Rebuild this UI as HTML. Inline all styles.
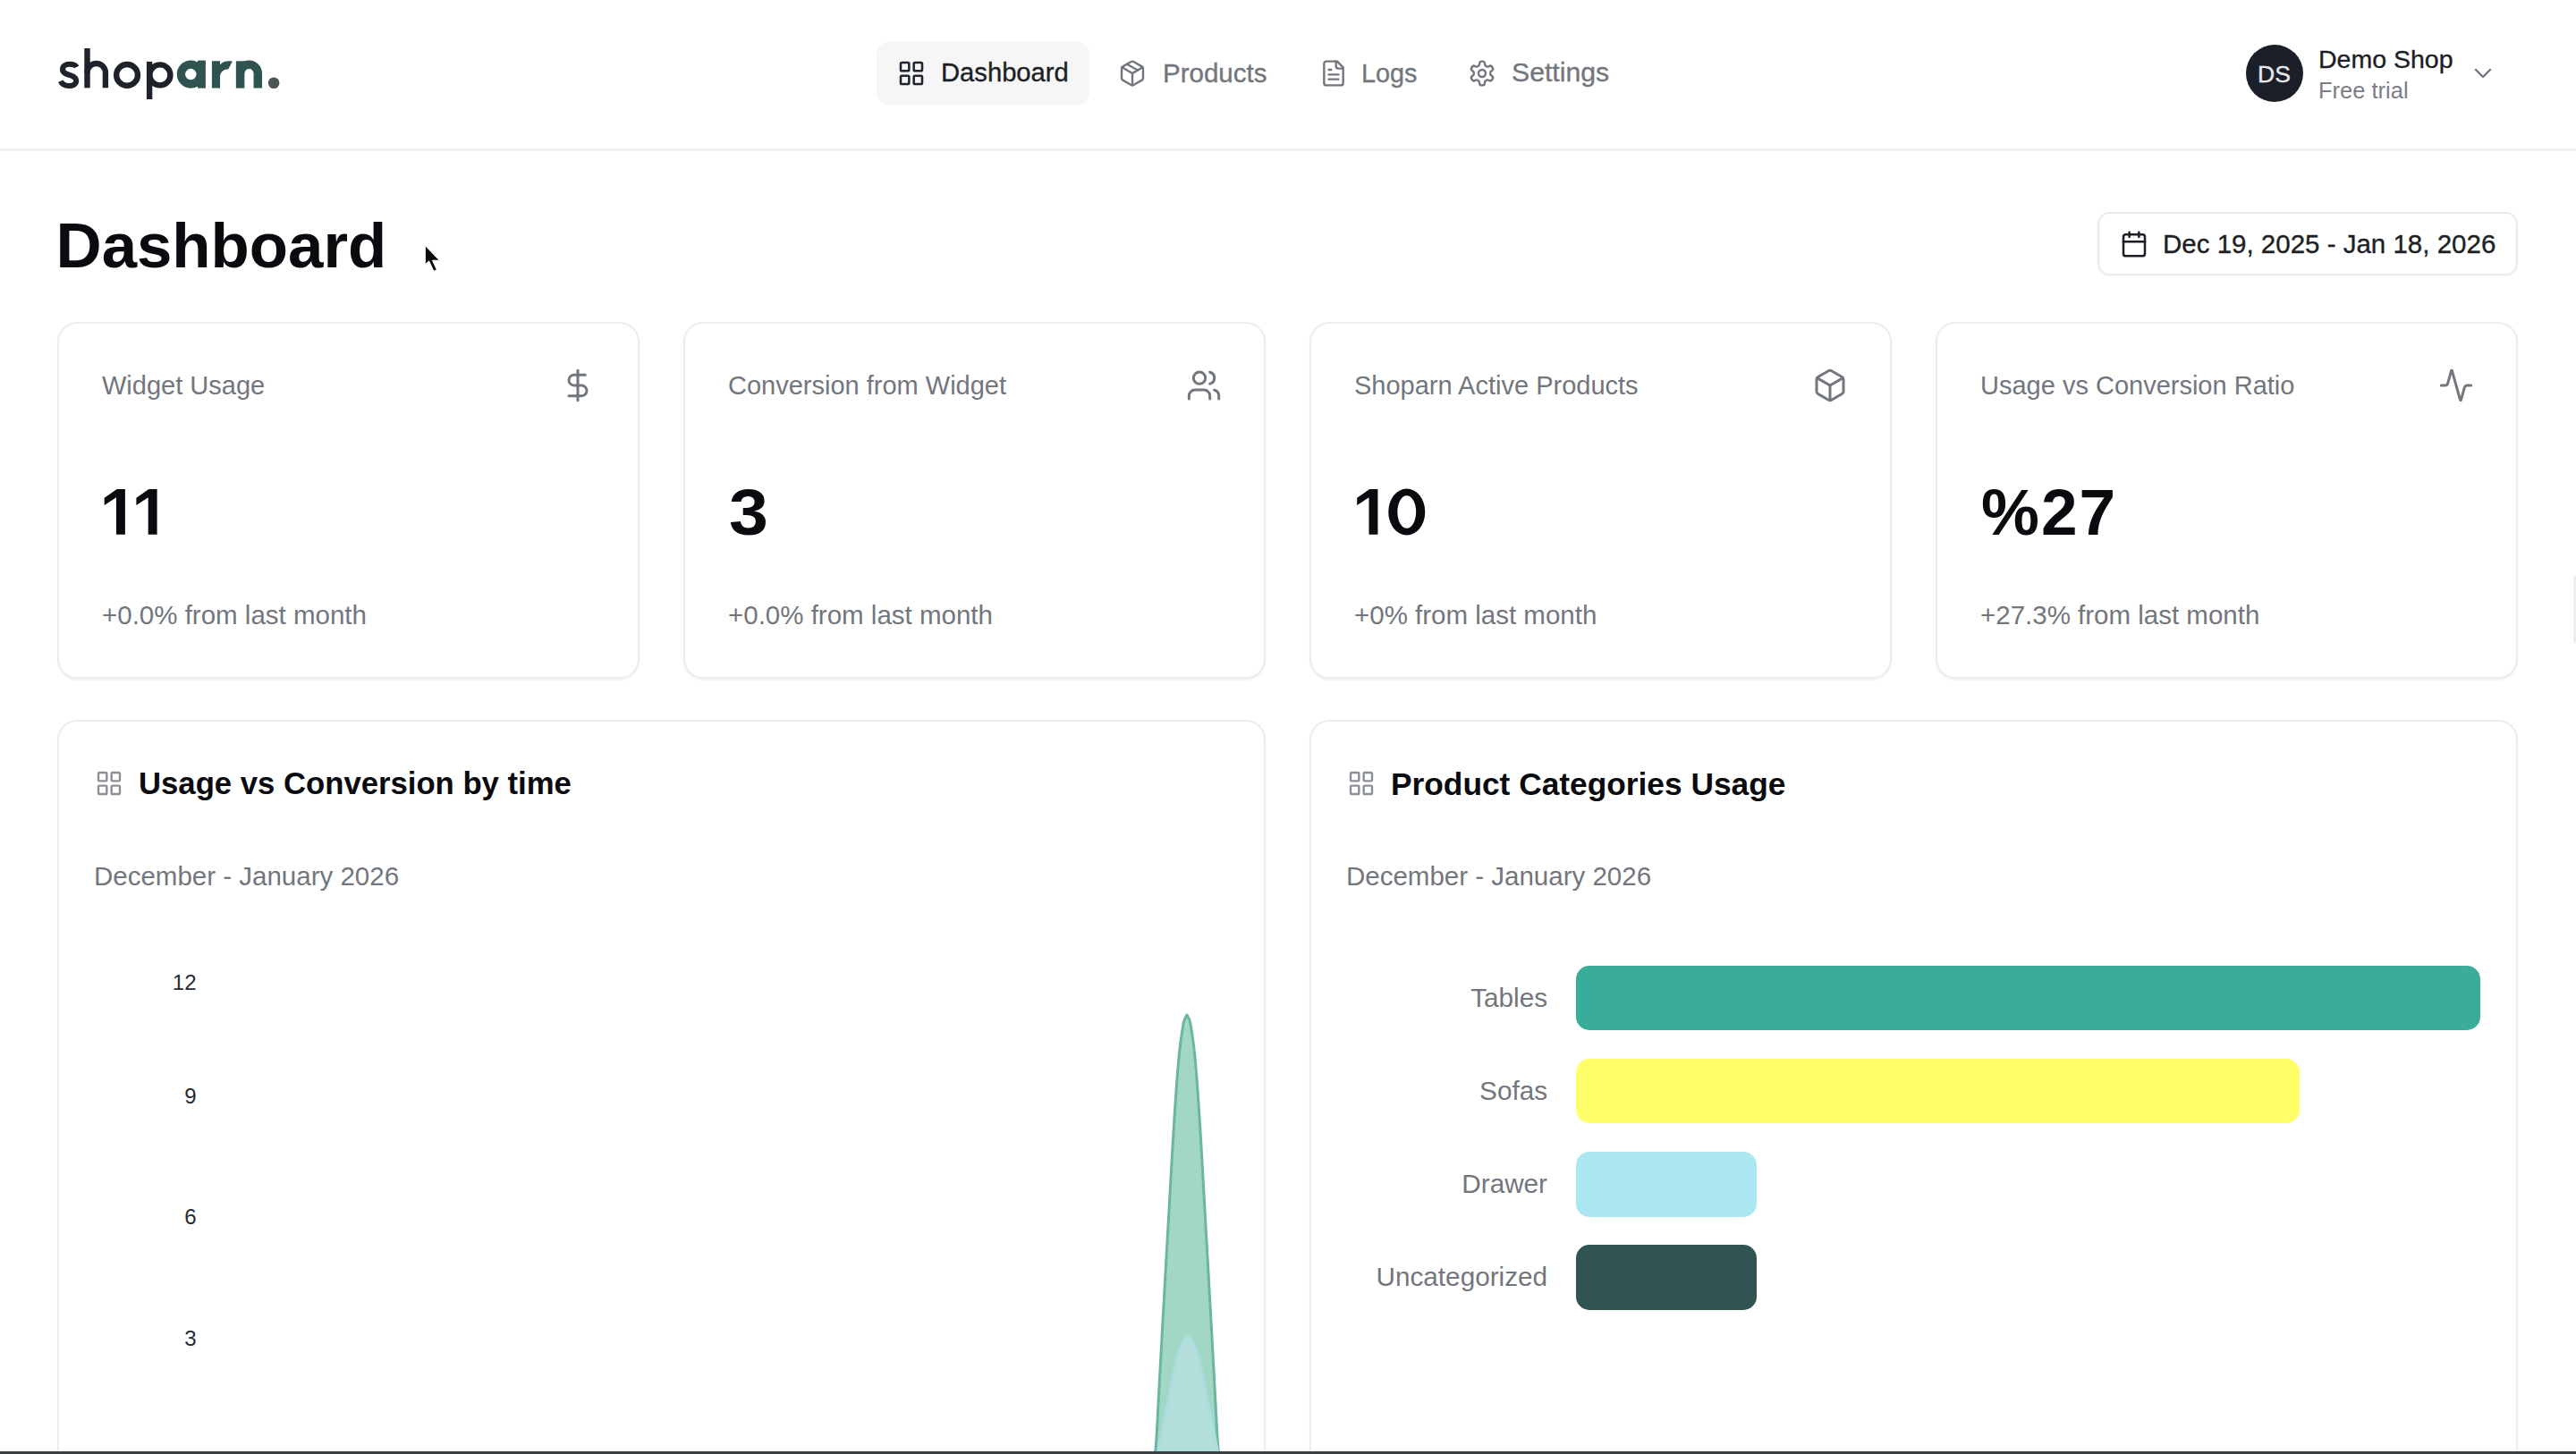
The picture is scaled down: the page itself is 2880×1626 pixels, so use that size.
<!DOCTYPE html>
<html><head><meta charset="utf-8"><title>Shoparn Dashboard</title>
<style>
html,body{margin:0;padding:0;background:#fff;width:2880px;height:1626px;overflow:hidden;position:relative;font-family:"Liberation Sans",sans-serif}
.t{position:absolute;line-height:1;white-space:nowrap}
.i{position:absolute;display:block}
.card{position:absolute;background:#fff;border:2px solid #ececee;border-radius:22px;box-sizing:border-box;box-shadow:0 2px 2px rgba(0,0,0,.05)}
.abs{position:absolute}
</style></head><body>
<div class="abs" style="left:0;top:166px;width:2880px;height:3px;background:#f0f1f3"></div>
<svg class="i" style="left:0;top:0;width:340px;height:130px" viewBox="0 0 340 130">
<g fill="none" stroke="#1e222b" stroke-width="6.4">
<path stroke-width="6.1" d="M85.6 75 C84.2 72.2 81.2 71.8 77.8 71.8 C72.8 71.8 70 74.3 70 77.6 C70 81.6 73.6 82.6 77.6 83.8 C82.2 85.1 85.2 86.6 85.2 90.3 C85.2 94.1 81.6 96 77.2 96 C72.6 96 69.3 94.2 67.8 90.8"/>
<path d="M97.5 54 V98.3"/>
<path d="M97.5 81.2 A10.2 10.2 0 0 1 117.9 81.2 V98.3"/>
<circle cx="142.05" cy="83.9" r="11.9"/>
<path d="M167.1 68.9 V111"/>
<circle cx="178.9" cy="83.9" r="11.5"/>
</g>
<g fill="none" stroke="#2f534f" stroke-width="9.3">
<circle cx="213.3" cy="83.1" r="10.9"/>
</g>
<g fill="#2f534f">
<rect x="221" y="67.6" width="8.9" height="31"/>
<path d="M236.9 68.3 H246 V72.5 C248.5 69.5 252 68.3 257 68.3 L259.9 68.6 L255.2 77.4 C251 77.2 247 79 246 85 V98.6 H236.9 Z"/>
</g>
<g fill="none" stroke="#2f534f" stroke-width="9.5">
<path d="M268.6 68.3 V98.6"/>
<path d="M268.6 82 A9.85 9.85 0 0 1 288.3 82 V98.6"/>
</g>
<circle cx="306.1" cy="92.8" r="6.3" fill="#4a5755"/>
</svg>
<div class="abs" style="left:980px;top:47px;width:238px;height:70px;border-radius:14px;background:#f6f6f7"></div>
<svg class="i" style="left:1002.5px;top:66.2px;width:32px;height:32px;color:#1f2430" viewBox="0 0 24 24" fill="none" stroke="currentColor" stroke-width="1.9" stroke-linecap="round" stroke-linejoin="round"><rect width="7" height="7" x="3" y="3" rx="1"/><rect width="7" height="7" x="14" y="3" rx="1"/><rect width="7" height="7" x="14" y="14" rx="1"/><rect width="7" height="7" x="3" y="14" rx="1"/></svg>
<div class="t" style="left:1052.0px;top:67.3px;font-size:29.2px;color:#1c1f26;font-weight:400;-webkit-text-stroke:0.35px currentColor;">Dashboard</div>
<svg class="i" style="left:1250.0px;top:66.0px;width:32px;height:32px;color:#72767d" viewBox="0 0 24 24" fill="none" stroke="currentColor" stroke-width="1.8" stroke-linecap="round" stroke-linejoin="round"><path d="m7.5 4.27 9 5.15"/><path d="M21 8a2 2 0 0 0-1-1.73l-7-4a2 2 0 0 0-2 0l-7 4A2 2 0 0 0 3 8v8a2 2 0 0 0 1 1.73l7 4a2 2 0 0 0 2 0l7-4A2 2 0 0 0 21 16Z"/><path d="m3.3 7 8.7 5 8.7-5"/><path d="M12 22V12"/></svg>
<div class="t" style="left:1300.0px;top:67.0px;font-size:29.5px;color:#72767d;font-weight:400;-webkit-text-stroke:0.35px currentColor;">Products</div>
<svg class="i" style="left:1474.6px;top:66.0px;width:32px;height:32px;color:#72767d" viewBox="0 0 24 24" fill="none" stroke="currentColor" stroke-width="1.8" stroke-linecap="round" stroke-linejoin="round"><path d="M15 2H6a2 2 0 0 0-2 2v16a2 2 0 0 0 2 2h12a2 2 0 0 0 2-2V7Z"/><path d="M14 2v4a2 2 0 0 0 2 2h4"/><path d="M10 9H8"/><path d="M16 13H8"/><path d="M16 17H8"/></svg>
<div class="t" style="left:1522.0px;top:67.6px;font-size:28.8px;color:#72767d;font-weight:400;-webkit-text-stroke:0.35px currentColor;">Logs</div>
<svg class="i" style="left:1641.0px;top:66.0px;width:32px;height:32px;color:#72767d" viewBox="0 0 24 24" fill="none" stroke="currentColor" stroke-width="1.8" stroke-linecap="round" stroke-linejoin="round"><path d="M12.22 2h-.44a2 2 0 0 0-2 2v.18a2 2 0 0 1-1 1.73l-.43.25a2 2 0 0 1-2 0l-.15-.08a2 2 0 0 0-2.73.73l-.22.38a2 2 0 0 0 .73 2.73l.15.1a2 2 0 0 1 1 1.72v.51a2 2 0 0 1-1 1.74l-.15.09a2 2 0 0 0-.73 2.73l.22.38a2 2 0 0 0 2.73.73l.15-.08a2 2 0 0 1 2 0l.43.25a2 2 0 0 1 1 1.73V20a2 2 0 0 0 2 2h.44a2 2 0 0 0 2-2v-.18a2 2 0 0 1 1-1.73l.43-.25a2 2 0 0 1 2 0l.15.08a2 2 0 0 0 2.73-.73l.22-.39a2 2 0 0 0-.73-2.73l-.15-.08a2 2 0 0 1-1-1.74v-.5a2 2 0 0 1 1-1.74l.15-.09a2 2 0 0 0 .73-2.73l-.22-.38a2 2 0 0 0-2.73-.73l-.15.08a2 2 0 0 1-2 0l-.43-.25a2 2 0 0 1-1-1.73V4a2 2 0 0 0-2-2z"/><circle cx="12" cy="12" r="3"/></svg>
<div class="t" style="left:1690.0px;top:66.4px;font-size:30.2px;color:#72767d;font-weight:400;-webkit-text-stroke:0.35px currentColor;">Settings</div>
<div class="abs" style="left:2511px;top:50px;width:64px;height:64px;border-radius:50%;background:#1b1f2a"></div>
<div class="t" style="left:2524.0px;top:70.0px;font-size:26.5px;color:#e8e9ec;font-weight:400;-webkit-text-stroke:0.35px currentColor;">DS</div>
<div class="t" style="left:2592.0px;top:52.2px;font-size:28.5px;color:#1c1f26;font-weight:400;-webkit-text-stroke:0.35px currentColor;">Demo Shop</div>
<div class="t" style="left:2592.0px;top:89.4px;font-size:25.5px;color:#7a7e85;font-weight:400;">Free trial</div>
<svg class="i" style="left:2760.3px;top:65.6px;width:32px;height:32px;color:#72767d" viewBox="0 0 24 24" fill="none" stroke="currentColor" stroke-width="1.8" stroke-linecap="round" stroke-linejoin="round"><path d="m6 9 6 6 6-6"/></svg>
<div class="t" style="left:62.5px;top:239.7px;font-size:70.8px;color:#0a0b0f;font-weight:700;">Dashboard</div>
<svg class="i" style="left:470px;top:272px;width:24px;height:36px" viewBox="0 0 24 36"><path d="M5.3 2.6 L5.3 23.8 L9.6 19.9 L14.9 31.3 L18.4 29.8 L13.5 19.2 L21.4 19.3 Z" fill="#0b0c10" stroke="#fff" stroke-width="1" stroke-linejoin="round"/></svg>
<div class="abs" style="left:2345px;top:237px;width:470px;height:71px;border:2px solid #e9eaec;border-radius:14px;box-sizing:border-box;box-shadow:0 1px 3px rgba(0,0,0,.05)"></div>
<svg class="i" style="left:2370.0px;top:256.7px;width:32px;height:32px;color:#1c1f26" viewBox="0 0 24 24" fill="none" stroke="currentColor" stroke-width="1.9" stroke-linecap="round" stroke-linejoin="round"><rect width="18" height="18" x="3" y="4" rx="2" ry="2"/><line x1="16" x2="16" y1="2" y2="6"/><line x1="8" x2="8" y1="2" y2="6"/><line x1="3" x2="21" y1="10" y2="10"/></svg>
<div class="t" style="left:2418.0px;top:258.0px;font-size:29.5px;color:#1c1f26;font-weight:400;-webkit-text-stroke:0.35px currentColor;">Dec 19, 2025 - Jan 18, 2026</div>
<div class="card" style="left:64px;top:360px;width:651px;height:399px"></div>
<div class="t" style="left:114.0px;top:416.8px;font-size:29px;color:#72767d;font-weight:400;">Widget Usage</div>
<svg class="i" style="left:625.7px;top:411.2px;width:40px;height:40px;color:#72767d" viewBox="0 0 24 24" fill="none" stroke="currentColor" stroke-width="1.8" stroke-linecap="round" stroke-linejoin="round"><line x1="12" x2="12" y1="2" y2="22"/><path d="M17 5H9.5a3.5 3.5 0 0 0 0 7h5a3.5 3.5 0 0 1 0 7H6"/></svg>
<svg class="i" style="left:0px;top:0;width:300px;height:700px" viewBox="0 0 300 700"><path d="M139.9 547 V597.7 H130.0 V556.3 L116.7 564.9 V556.8 L130.7 547 Z M175.6 547 V597.7 H165.7 V556.3 L152.4 564.9 V556.8 L166.4 547 Z" fill="#0a0b0f" fill-rule="evenodd"/></svg>
<div class="t" style="left:114.0px;top:672.7px;font-size:29.5px;color:#72767d;font-weight:400;">+0.0% from last month</div>
<div class="card" style="left:764px;top:360px;width:651px;height:399px"></div>
<div class="t" style="left:814.0px;top:416.8px;font-size:29px;color:#72767d;font-weight:400;">Conversion from Widget</div>
<svg class="i" style="left:1325.7px;top:411.2px;width:40px;height:40px;color:#72767d" viewBox="0 0 24 24" fill="none" stroke="currentColor" stroke-width="1.8" stroke-linecap="round" stroke-linejoin="round"><path d="M16 21v-2a4 4 0 0 0-4-4H6a4 4 0 0 0-4 4v2"/><circle cx="9" cy="7" r="4"/><path d="M22 21v-2a4 4 0 0 0-3-3.87"/><path d="M16 3.13a4 4 0 0 1 0 7.75"/></svg>
<div class="t" style="left:815.0px;top:535.9px;font-size:73px;color:#0a0b0f;font-weight:700;letter-spacing:0;display:inline-block;transform:scaleX(1.08);transform-origin:0 0;">3</div>
<div class="t" style="left:814.0px;top:672.7px;font-size:29.5px;color:#72767d;font-weight:400;">+0.0% from last month</div>
<div class="card" style="left:1464px;top:360px;width:651px;height:399px"></div>
<div class="t" style="left:1514.0px;top:416.8px;font-size:29px;color:#72767d;font-weight:400;">Shoparn Active Products</div>
<svg class="i" style="left:2025.7px;top:411.2px;width:40px;height:40px;color:#72767d" viewBox="0 0 24 24" fill="none" stroke="currentColor" stroke-width="1.8" stroke-linecap="round" stroke-linejoin="round"><path d="M21 8a2 2 0 0 0-1-1.73l-7-4a2 2 0 0 0-2 0l-7 4A2 2 0 0 0 3 8v8a2 2 0 0 0 1 1.73l7 4a2 2 0 0 0 2 0l7-4A2 2 0 0 0 21 16Z"/><path d="m3.3 7 8.7 5 8.7-5"/><path d="M12 22V12"/></svg>
<svg class="i" style="left:1400px;top:0;width:300px;height:700px" viewBox="0 0 300 700"><path d="M140.4 547 V597.7 H130.5 V556.3 L117.2 564.9 V556.8 L131.2 547 Z M152.25 572.5 A20.5 26 0 1 0 193.25 572.5 A20.5 26 0 1 0 152.25 572.5 Z M162.35 572.5 A10.4 18.2 0 1 1 183.15 572.5 A10.4 18.2 0 1 1 162.35 572.5 Z" fill="#0a0b0f" fill-rule="evenodd"/></svg>
<div class="t" style="left:1514.0px;top:672.7px;font-size:29.5px;color:#72767d;font-weight:400;">+0% from last month</div>
<div class="card" style="left:2164px;top:360px;width:651px;height:399px"></div>
<div class="t" style="left:2214.0px;top:416.8px;font-size:29px;color:#72767d;font-weight:400;">Usage vs Conversion Ratio</div>
<svg class="i" style="left:2725.7px;top:411.2px;width:40px;height:40px;color:#72767d" viewBox="0 0 24 24" fill="none" stroke="currentColor" stroke-width="1.8" stroke-linecap="round" stroke-linejoin="round"><path d="M22 12h-2.48a2 2 0 0 0-1.93 1.46l-2.35 8.36a.25.25 0 0 1-.48 0L9.24 2.18a.25.25 0 0 0-.48 0l-2.35 8.36A2 2 0 0 1 4.49 12H2"/></svg>
<div class="t" style="left:2215.0px;top:535.9px;font-size:73px;color:#0a0b0f;font-weight:700;letter-spacing:2px;">%27</div>
<div class="t" style="left:2214.0px;top:672.7px;font-size:29.5px;color:#72767d;font-weight:400;">+27.3% from last month</div>
<div class="card" style="left:64px;top:805px;width:1351px;height:900px"></div>
<svg class="i" style="left:105.8px;top:859.7px;width:32px;height:32px;color:#8b8f97" viewBox="0 0 24 24" fill="none" stroke="currentColor" stroke-width="1.8" stroke-linecap="round" stroke-linejoin="round"><rect width="7" height="7" x="3" y="3" rx="1"/><rect width="7" height="7" x="14" y="3" rx="1"/><rect width="7" height="7" x="14" y="14" rx="1"/><rect width="7" height="7" x="3" y="14" rx="1"/></svg>
<div class="t" style="left:155.0px;top:859.0px;font-size:34.7px;color:#0a0b0f;font-weight:700;">Usage vs Conversion by time</div>
<div class="t" style="left:105.0px;top:965.2px;font-size:29.5px;color:#72767d;font-weight:400;">December - January 2026</div>
<div class="card" style="left:1464px;top:805px;width:1351px;height:900px"></div>
<svg class="i" style="left:1505.8px;top:859.7px;width:32px;height:32px;color:#8b8f97" viewBox="0 0 24 24" fill="none" stroke="currentColor" stroke-width="1.8" stroke-linecap="round" stroke-linejoin="round"><rect width="7" height="7" x="3" y="3" rx="1"/><rect width="7" height="7" x="14" y="3" rx="1"/><rect width="7" height="7" x="14" y="14" rx="1"/><rect width="7" height="7" x="3" y="14" rx="1"/></svg>
<div class="t" style="left:1555.0px;top:858.5px;font-size:35.3px;color:#0a0b0f;font-weight:700;">Product Categories Usage</div>
<div class="t" style="left:1505.0px;top:965.2px;font-size:29.5px;color:#72767d;font-weight:400;">December - January 2026</div>
<div class="t" style="right:2660.5px;top:1086.9px;font-size:24px;color:#262a31;font-weight:400;">12</div>
<div class="t" style="right:2660.5px;top:1214.1px;font-size:24px;color:#262a31;font-weight:400;">9</div>
<div class="t" style="right:2660.5px;top:1349.4px;font-size:24px;color:#262a31;font-weight:400;">6</div>
<div class="t" style="right:2660.5px;top:1484.7px;font-size:24px;color:#262a31;font-weight:400;">3</div>
<div class="t" style="right:2660.5px;top:1620.0px;font-size:24px;color:#262a31;font-weight:400;">0</div>
<svg class="i" style="left:0;top:0;width:2880px;height:1626px" viewBox="0 0 2880 1626"><path d="M1290.10 1631.60 L1292.05 1620.14 L1292.89 1608.68 L1293.59 1597.23 L1294.20 1585.77 L1294.77 1574.31 L1295.35 1562.85 L1295.97 1551.40 L1296.60 1539.94 L1297.22 1528.48 L1297.85 1517.02 L1298.47 1505.57 L1299.10 1494.11 L1299.74 1482.65 L1300.37 1471.19 L1301.01 1459.73 L1301.64 1448.28 L1302.28 1436.82 L1302.92 1425.36 L1303.57 1413.90 L1304.21 1402.45 L1304.86 1390.99 L1305.51 1379.53 L1306.16 1368.07 L1306.81 1356.62 L1307.47 1345.16 L1308.11 1333.70 L1308.74 1322.24 L1309.38 1310.78 L1310.02 1299.33 L1310.68 1287.87 L1311.34 1276.41 L1312.03 1264.95 L1312.75 1253.50 L1313.50 1242.04 L1314.27 1230.58 L1315.05 1219.12 L1315.88 1207.67 L1316.79 1196.21 L1317.80 1184.75 L1317.92 1183.48 L1318.05 1182.20 L1318.17 1180.93 L1318.30 1179.66 L1318.43 1178.38 L1318.56 1177.11 L1318.70 1175.84 L1318.83 1174.57 L1318.98 1173.29 L1319.12 1172.02 L1319.27 1170.75 L1319.42 1169.47 L1319.58 1168.20 L1319.74 1166.93 L1319.90 1165.65 L1320.07 1164.38 L1320.24 1163.11 L1320.41 1161.83 L1320.59 1160.56 L1320.77 1159.29 L1320.95 1158.02 L1321.14 1156.74 L1321.34 1155.47 L1321.53 1154.20 L1321.73 1152.92 L1321.93 1151.65 L1322.12 1150.38 L1322.32 1149.10 L1322.53 1147.83 L1322.75 1146.56 L1322.99 1145.28 L1323.26 1144.01 L1323.55 1142.74 L1323.89 1141.47 L1324.27 1140.19 L1324.83 1138.92 L1325.53 1137.65 L1326.29 1136.37 L1327.00 1135.10 L1327.71 1136.37 L1328.47 1137.65 L1329.17 1138.92 L1329.73 1140.19 L1330.11 1141.47 L1330.45 1142.74 L1330.74 1144.01 L1331.01 1145.28 L1331.25 1146.56 L1331.47 1147.83 L1331.68 1149.10 L1331.88 1150.38 L1332.07 1151.65 L1332.27 1152.92 L1332.47 1154.20 L1332.66 1155.47 L1332.86 1156.74 L1333.05 1158.02 L1333.23 1159.29 L1333.41 1160.56 L1333.59 1161.83 L1333.76 1163.11 L1333.93 1164.38 L1334.10 1165.65 L1334.26 1166.93 L1334.42 1168.20 L1334.58 1169.47 L1334.73 1170.75 L1334.88 1172.02 L1335.02 1173.29 L1335.17 1174.57 L1335.30 1175.84 L1335.44 1177.11 L1335.57 1178.38 L1335.70 1179.66 L1335.83 1180.93 L1335.95 1182.20 L1336.08 1183.48 L1336.20 1184.75 L1337.21 1196.21 L1338.12 1207.67 L1338.95 1219.12 L1339.73 1230.58 L1340.50 1242.04 L1341.25 1253.50 L1341.97 1264.95 L1342.66 1276.41 L1343.32 1287.87 L1343.98 1299.33 L1344.62 1310.78 L1345.26 1322.24 L1345.89 1333.70 L1346.53 1345.16 L1347.19 1356.62 L1347.84 1368.07 L1348.49 1379.53 L1349.14 1390.99 L1349.79 1402.45 L1350.43 1413.90 L1351.08 1425.36 L1351.72 1436.82 L1352.36 1448.28 L1352.99 1459.73 L1353.63 1471.19 L1354.26 1482.65 L1354.90 1494.11 L1355.53 1505.57 L1356.15 1517.02 L1356.78 1528.48 L1357.40 1539.94 L1358.03 1551.40 L1358.65 1562.85 L1359.23 1574.31 L1359.80 1585.77 L1360.41 1597.23 L1361.11 1608.68 L1361.95 1620.14 L1363.90 1631.60 Z" fill="#a2d6c5" stroke="none"/><path d="M1290.10 1631.60 L1292.05 1620.14 L1292.89 1608.68 L1293.59 1597.23 L1294.20 1585.77 L1294.77 1574.31 L1295.35 1562.85 L1295.97 1551.40 L1296.60 1539.94 L1297.22 1528.48 L1297.85 1517.02 L1298.47 1505.57 L1299.10 1494.11 L1299.74 1482.65 L1300.37 1471.19 L1301.01 1459.73 L1301.64 1448.28 L1302.28 1436.82 L1302.92 1425.36 L1303.57 1413.90 L1304.21 1402.45 L1304.86 1390.99 L1305.51 1379.53 L1306.16 1368.07 L1306.81 1356.62 L1307.47 1345.16 L1308.11 1333.70 L1308.74 1322.24 L1309.38 1310.78 L1310.02 1299.33 L1310.68 1287.87 L1311.34 1276.41 L1312.03 1264.95 L1312.75 1253.50 L1313.50 1242.04 L1314.27 1230.58 L1315.05 1219.12 L1315.88 1207.67 L1316.79 1196.21 L1317.80 1184.75 L1317.92 1183.48 L1318.05 1182.20 L1318.17 1180.93 L1318.30 1179.66 L1318.43 1178.38 L1318.56 1177.11 L1318.70 1175.84 L1318.83 1174.57 L1318.98 1173.29 L1319.12 1172.02 L1319.27 1170.75 L1319.42 1169.47 L1319.58 1168.20 L1319.74 1166.93 L1319.90 1165.65 L1320.07 1164.38 L1320.24 1163.11 L1320.41 1161.83 L1320.59 1160.56 L1320.77 1159.29 L1320.95 1158.02 L1321.14 1156.74 L1321.34 1155.47 L1321.53 1154.20 L1321.73 1152.92 L1321.93 1151.65 L1322.12 1150.38 L1322.32 1149.10 L1322.53 1147.83 L1322.75 1146.56 L1322.99 1145.28 L1323.26 1144.01 L1323.55 1142.74 L1323.89 1141.47 L1324.27 1140.19 L1324.83 1138.92 L1325.53 1137.65 L1326.29 1136.37 L1327.00 1135.10 L1327.71 1136.37 L1328.47 1137.65 L1329.17 1138.92 L1329.73 1140.19 L1330.11 1141.47 L1330.45 1142.74 L1330.74 1144.01 L1331.01 1145.28 L1331.25 1146.56 L1331.47 1147.83 L1331.68 1149.10 L1331.88 1150.38 L1332.07 1151.65 L1332.27 1152.92 L1332.47 1154.20 L1332.66 1155.47 L1332.86 1156.74 L1333.05 1158.02 L1333.23 1159.29 L1333.41 1160.56 L1333.59 1161.83 L1333.76 1163.11 L1333.93 1164.38 L1334.10 1165.65 L1334.26 1166.93 L1334.42 1168.20 L1334.58 1169.47 L1334.73 1170.75 L1334.88 1172.02 L1335.02 1173.29 L1335.17 1174.57 L1335.30 1175.84 L1335.44 1177.11 L1335.57 1178.38 L1335.70 1179.66 L1335.83 1180.93 L1335.95 1182.20 L1336.08 1183.48 L1336.20 1184.75 L1337.21 1196.21 L1338.12 1207.67 L1338.95 1219.12 L1339.73 1230.58 L1340.50 1242.04 L1341.25 1253.50 L1341.97 1264.95 L1342.66 1276.41 L1343.32 1287.87 L1343.98 1299.33 L1344.62 1310.78 L1345.26 1322.24 L1345.89 1333.70 L1346.53 1345.16 L1347.19 1356.62 L1347.84 1368.07 L1348.49 1379.53 L1349.14 1390.99 L1349.79 1402.45 L1350.43 1413.90 L1351.08 1425.36 L1351.72 1436.82 L1352.36 1448.28 L1352.99 1459.73 L1353.63 1471.19 L1354.26 1482.65 L1354.90 1494.11 L1355.53 1505.57 L1356.15 1517.02 L1356.78 1528.48 L1357.40 1539.94 L1358.03 1551.40 L1358.65 1562.85 L1359.23 1574.31 L1359.80 1585.77 L1360.41 1597.23 L1361.11 1608.68 L1361.95 1620.14 L1363.90 1631.60" fill="none" stroke="#6cb5a2" stroke-width="3" stroke-linejoin="round"/><path d="M1291.10 1631.60 L1293.05 1628.43 L1293.89 1625.27 L1294.59 1622.10 L1295.20 1618.94 L1295.77 1615.77 L1296.35 1612.60 L1296.97 1609.44 L1297.60 1606.27 L1298.22 1603.10 L1298.85 1599.94 L1299.47 1596.77 L1300.10 1593.61 L1300.74 1590.44 L1301.37 1587.27 L1302.01 1584.11 L1302.64 1580.94 L1303.28 1577.78 L1303.92 1574.61 L1304.57 1571.44 L1305.21 1568.28 L1305.86 1565.11 L1306.51 1561.94 L1307.16 1558.78 L1307.81 1555.61 L1308.47 1552.45 L1309.11 1549.28 L1309.74 1546.11 L1310.38 1542.95 L1311.02 1539.78 L1311.68 1536.62 L1312.34 1533.45 L1313.03 1530.28 L1313.75 1527.12 L1314.50 1523.95 L1315.27 1520.78 L1316.05 1517.62 L1316.88 1514.45 L1317.79 1511.29 L1318.80 1508.12 L1318.92 1507.77 L1319.05 1507.42 L1319.17 1507.06 L1319.30 1506.71 L1319.43 1506.36 L1319.56 1506.01 L1319.70 1505.66 L1319.83 1505.31 L1319.98 1504.95 L1320.12 1504.60 L1320.27 1504.25 L1320.42 1503.90 L1320.58 1503.55 L1320.74 1503.19 L1320.90 1502.84 L1321.07 1502.49 L1321.24 1502.14 L1321.41 1501.79 L1321.59 1501.44 L1321.77 1501.08 L1321.95 1500.73 L1322.14 1500.38 L1322.34 1500.03 L1322.53 1499.68 L1322.73 1499.33 L1322.93 1498.97 L1323.12 1498.62 L1323.32 1498.27 L1323.53 1497.92 L1323.75 1497.57 L1323.99 1497.21 L1324.26 1496.86 L1324.55 1496.51 L1324.89 1496.16 L1325.27 1495.81 L1325.83 1495.46 L1326.53 1495.10 L1327.29 1494.75 L1328.00 1494.40 L1328.71 1494.75 L1329.47 1495.10 L1330.17 1495.46 L1330.73 1495.81 L1331.11 1496.16 L1331.45 1496.51 L1331.74 1496.86 L1332.01 1497.21 L1332.25 1497.57 L1332.47 1497.92 L1332.68 1498.27 L1332.88 1498.62 L1333.07 1498.97 L1333.27 1499.33 L1333.47 1499.68 L1333.66 1500.03 L1333.86 1500.38 L1334.05 1500.73 L1334.23 1501.08 L1334.41 1501.44 L1334.59 1501.79 L1334.76 1502.14 L1334.93 1502.49 L1335.10 1502.84 L1335.26 1503.19 L1335.42 1503.55 L1335.58 1503.90 L1335.73 1504.25 L1335.88 1504.60 L1336.02 1504.95 L1336.17 1505.31 L1336.30 1505.66 L1336.44 1506.01 L1336.57 1506.36 L1336.70 1506.71 L1336.83 1507.06 L1336.95 1507.42 L1337.08 1507.77 L1337.20 1508.12 L1338.21 1511.29 L1339.12 1514.45 L1339.95 1517.62 L1340.73 1520.78 L1341.50 1523.95 L1342.25 1527.12 L1342.97 1530.28 L1343.66 1533.45 L1344.32 1536.62 L1344.98 1539.78 L1345.62 1542.95 L1346.26 1546.11 L1346.89 1549.28 L1347.53 1552.45 L1348.19 1555.61 L1348.84 1558.78 L1349.49 1561.94 L1350.14 1565.11 L1350.79 1568.28 L1351.43 1571.44 L1352.08 1574.61 L1352.72 1577.78 L1353.36 1580.94 L1353.99 1584.11 L1354.63 1587.27 L1355.26 1590.44 L1355.90 1593.61 L1356.53 1596.77 L1357.15 1599.94 L1357.78 1603.10 L1358.40 1606.27 L1359.03 1609.44 L1359.65 1612.60 L1360.23 1615.77 L1360.80 1618.94 L1361.41 1622.10 L1362.11 1625.27 L1362.95 1628.43 L1364.90 1631.60 Z" fill="#b3dfdb" stroke="none"/><path d="M1291.10 1631.60 L1293.05 1628.43 L1293.89 1625.27 L1294.59 1622.10 L1295.20 1618.94 L1295.77 1615.77 L1296.35 1612.60 L1296.97 1609.44 L1297.60 1606.27 L1298.22 1603.10 L1298.85 1599.94 L1299.47 1596.77 L1300.10 1593.61 L1300.74 1590.44 L1301.37 1587.27 L1302.01 1584.11 L1302.64 1580.94 L1303.28 1577.78 L1303.92 1574.61 L1304.57 1571.44 L1305.21 1568.28 L1305.86 1565.11 L1306.51 1561.94 L1307.16 1558.78 L1307.81 1555.61 L1308.47 1552.45 L1309.11 1549.28 L1309.74 1546.11 L1310.38 1542.95 L1311.02 1539.78 L1311.68 1536.62 L1312.34 1533.45 L1313.03 1530.28 L1313.75 1527.12 L1314.50 1523.95 L1315.27 1520.78 L1316.05 1517.62 L1316.88 1514.45 L1317.79 1511.29 L1318.80 1508.12 L1318.92 1507.77 L1319.05 1507.42 L1319.17 1507.06 L1319.30 1506.71 L1319.43 1506.36 L1319.56 1506.01 L1319.70 1505.66 L1319.83 1505.31 L1319.98 1504.95 L1320.12 1504.60 L1320.27 1504.25 L1320.42 1503.90 L1320.58 1503.55 L1320.74 1503.19 L1320.90 1502.84 L1321.07 1502.49 L1321.24 1502.14 L1321.41 1501.79 L1321.59 1501.44 L1321.77 1501.08 L1321.95 1500.73 L1322.14 1500.38 L1322.34 1500.03 L1322.53 1499.68 L1322.73 1499.33 L1322.93 1498.97 L1323.12 1498.62 L1323.32 1498.27 L1323.53 1497.92 L1323.75 1497.57 L1323.99 1497.21 L1324.26 1496.86 L1324.55 1496.51 L1324.89 1496.16 L1325.27 1495.81 L1325.83 1495.46 L1326.53 1495.10 L1327.29 1494.75 L1328.00 1494.40 L1328.71 1494.75 L1329.47 1495.10 L1330.17 1495.46 L1330.73 1495.81 L1331.11 1496.16 L1331.45 1496.51 L1331.74 1496.86 L1332.01 1497.21 L1332.25 1497.57 L1332.47 1497.92 L1332.68 1498.27 L1332.88 1498.62 L1333.07 1498.97 L1333.27 1499.33 L1333.47 1499.68 L1333.66 1500.03 L1333.86 1500.38 L1334.05 1500.73 L1334.23 1501.08 L1334.41 1501.44 L1334.59 1501.79 L1334.76 1502.14 L1334.93 1502.49 L1335.10 1502.84 L1335.26 1503.19 L1335.42 1503.55 L1335.58 1503.90 L1335.73 1504.25 L1335.88 1504.60 L1336.02 1504.95 L1336.17 1505.31 L1336.30 1505.66 L1336.44 1506.01 L1336.57 1506.36 L1336.70 1506.71 L1336.83 1507.06 L1336.95 1507.42 L1337.08 1507.77 L1337.20 1508.12 L1338.21 1511.29 L1339.12 1514.45 L1339.95 1517.62 L1340.73 1520.78 L1341.50 1523.95 L1342.25 1527.12 L1342.97 1530.28 L1343.66 1533.45 L1344.32 1536.62 L1344.98 1539.78 L1345.62 1542.95 L1346.26 1546.11 L1346.89 1549.28 L1347.53 1552.45 L1348.19 1555.61 L1348.84 1558.78 L1349.49 1561.94 L1350.14 1565.11 L1350.79 1568.28 L1351.43 1571.44 L1352.08 1574.61 L1352.72 1577.78 L1353.36 1580.94 L1353.99 1584.11 L1354.63 1587.27 L1355.26 1590.44 L1355.90 1593.61 L1356.53 1596.77 L1357.15 1599.94 L1357.78 1603.10 L1358.40 1606.27 L1359.03 1609.44 L1359.65 1612.60 L1360.23 1615.77 L1360.80 1618.94 L1361.41 1622.10 L1362.11 1625.27 L1362.95 1628.43 L1364.90 1631.60" fill="none" stroke="#aadde2" stroke-width="2.5" stroke-linejoin="round"/></svg>
<div class="abs" style="left:1761.5px;top:1079.6px;width:1011.7px;height:72.5px;border-radius:15px;background:#3aad9a"></div>
<div class="t" style="right:1150.0px;top:1100.7px;font-size:29.7px;color:#72767d;font-weight:400;">Tables</div>
<div class="abs" style="left:1761.5px;top:1183.7px;width:809.9px;height:72.5px;border-radius:15px;background:#ffff6a"></div>
<div class="t" style="right:1150.0px;top:1204.9px;font-size:29.7px;color:#72767d;font-weight:400;">Sofas</div>
<div class="abs" style="left:1761.5px;top:1288.3px;width:202.0px;height:72.5px;border-radius:15px;background:#aae7f0"></div>
<div class="t" style="right:1150.0px;top:1308.9px;font-size:29.7px;color:#72767d;font-weight:400;">Drawer</div>
<div class="abs" style="left:1761.5px;top:1392px;width:202.0px;height:72.5px;border-radius:15px;background:#2f5451"></div>
<div class="t" style="right:1150.0px;top:1413.2px;font-size:29.7px;color:#72767d;font-weight:400;">Uncategorized</div>
<div class="abs" style="left:2877px;top:644px;width:3px;height:75px;background:#efeff1"></div>
<div class="abs" style="left:0;top:1623px;width:2880px;height:3px;background:#3b3e43"></div>
</body></html>
